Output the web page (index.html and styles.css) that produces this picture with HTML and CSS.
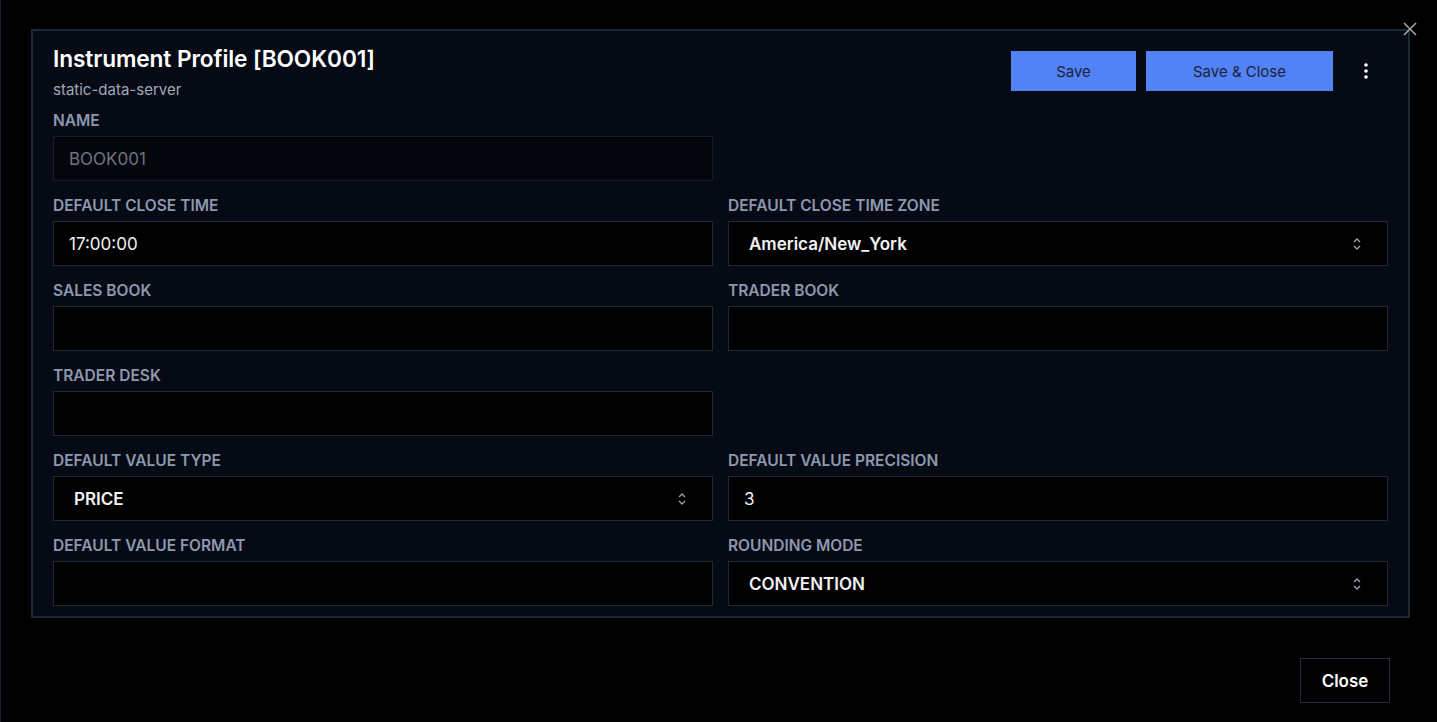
FILE: index.html
```html
<!DOCTYPE html>
<html lang="en">
<head>
  <meta charset="UTF-8">
  <meta name="viewport" content="width=device-width, initial-scale=1.0">
  <title>Instrument Profile [BOOK001]</title>
  <link rel="stylesheet" href="styles.css">
</head>
<body>
  <div class="dialog">
    <!-- 主面板 -->
    <div class="panel">
      <div class="dismiss">
        <svg width="14" height="14" viewBox="0 0 14 14"><path d="M1 1L13 13M13 1L1 13" stroke="#a3a3a3" stroke-width="1.6" fill="none"/></svg>
      </div>

      <div class="panel-head">
        <div>
          <div class="title">Instrument Profile [BOOK001]</div>
          <div class="subtitle">static-data-server</div>
        </div>
        <div class="actions">
          <div class="btn btn-save">Save</div>
          <div class="btn btn-save-close">Save &amp; Close</div>
          <div class="kebab">
            <svg width="6" height="18" viewBox="0 0 6 18"><circle cx="3" cy="3" r="1.8" fill="#fff"/><circle cx="3" cy="9" r="1.8" fill="#fff"/><circle cx="3" cy="15" r="1.8" fill="#fff"/></svg>
          </div>
        </div>
      </div>

      <div class="form">
        <div class="field">
          <div class="label">NAME</div>
          <div class="input disabled">BOOK001</div>
        </div>
        <div class="field"></div>

        <div class="field">
          <div class="label">DEFAULT CLOSE TIME</div>
          <div class="input">17:00:00</div>
        </div>
        <div class="field">
          <div class="label">DEFAULT CLOSE TIME ZONE</div>
          <div class="input select">America/New_York
            <svg class="chev" width="10" height="14" viewBox="0 0 10 14"><path d="M2 5L5 2L8 5M2 9L5 12L8 9" stroke="#9ca3af" stroke-width="1.3" fill="none"/></svg>
          </div>
        </div>

        <div class="field">
          <div class="label">SALES BOOK</div>
          <div class="input"></div>
        </div>
        <div class="field">
          <div class="label">TRADER BOOK</div>
          <div class="input"></div>
        </div>

        <div class="field">
          <div class="label">TRADER DESK</div>
          <div class="input"></div>
        </div>
        <div class="field"></div>

        <div class="field">
          <div class="label">DEFAULT VALUE TYPE</div>
          <div class="input select">PRICE
            <svg class="chev" width="10" height="14" viewBox="0 0 10 14"><path d="M2 5L5 2L8 5M2 9L5 12L8 9" stroke="#9ca3af" stroke-width="1.3" fill="none"/></svg>
          </div>
        </div>
        <div class="field">
          <div class="label">DEFAULT VALUE PRECISION</div>
          <div class="input">3</div>
        </div>

        <div class="field">
          <div class="label">DEFAULT VALUE FORMAT</div>
          <div class="input"></div>
        </div>
        <div class="field">
          <div class="label">ROUNDING MODE</div>
          <div class="input select">CONVENTION
            <svg class="chev" width="10" height="14" viewBox="0 0 10 14"><path d="M2 5L5 2L8 5M2 9L5 12L8 9" stroke="#9ca3af" stroke-width="1.3" fill="none"/></svg>
          </div>
        </div>
      </div>
    </div>

    <!-- 底部 -->
    <div class="footer">
      <div class="btn-close">Close</div>
    </div>
  </div>
</body>
</html>
```

FILE: styles.css
```css
* {margin:0; padding:0; box-sizing:border-box;}
body,html {
  height:100%; width:100%; overflow:hidden;
  font-family: Inter, "Noto Sans", Arial, sans-serif;
  color:#fff; background:#000;
}
.dialog {
  height:100%; border-left:1px solid #1c2233;
  padding:29px 0 0 30px;
}
.panel {
  position:relative; width:1379px;
  background:#050a15; border:2px solid #1f2636;
  padding:16px 20px 10px;
}
.dismiss {
  position:absolute; top:-9px; right:-9px; width:14px; height:14px;
  display:flex;
}
.panel-head {
  display:flex; justify-content:space-between; align-items:flex-start;
}
.title {
  font-size:22.7px; font-weight:600; line-height:24px; letter-spacing:-0.1px;
}
.subtitle {
  font-size:15px; line-height:20px; color:#a1a8b5; margin-top:9px;
}
.actions {
  display:flex; align-items:center; gap:10px; margin-top:4px; margin-right:6px;
}
.btn {
  height:40px; display:flex; justify-content:center; align-items:center;
  background:#5282f4; color:#1a2241; font-size:15px;
}
.btn-save {width:125px;}
.btn-save-close {width:187px;}
.kebab {
  width:32px; height:40px; margin-left:7px;
  display:flex; justify-content:center; align-items:center;
}
.form {
  display:grid; grid-template-columns:660px 660px; column-gap:15px; row-gap:16px;
  margin-top:12px;
}
.label {
  font-size:15.5px; font-weight:600; line-height:17px; color:#8e98ad;
  margin-bottom:7px;
}
.input {
  height:45px; background:#000; border:1px solid #1f2637;
  display:flex; align-items:center; padding:0 15px;
  font-size:17px; color:#f2f2f2;
}
.input.disabled {
  background:#03060d; border-color:#151b29; color:#6f747f;
}
.input.select {
  justify-content:space-between; padding:0 25px 0 20px; font-weight:600;
}
.chev {flex:none;}
.footer {
  display:flex; justify-content:flex-end; padding:40px 47px 0 0;
}
.btn-close {
  width:90px; height:45px; border:1px solid #262d3d;
  display:flex; justify-content:center; align-items:center;
  font-size:17px; font-weight:600;
}
```
